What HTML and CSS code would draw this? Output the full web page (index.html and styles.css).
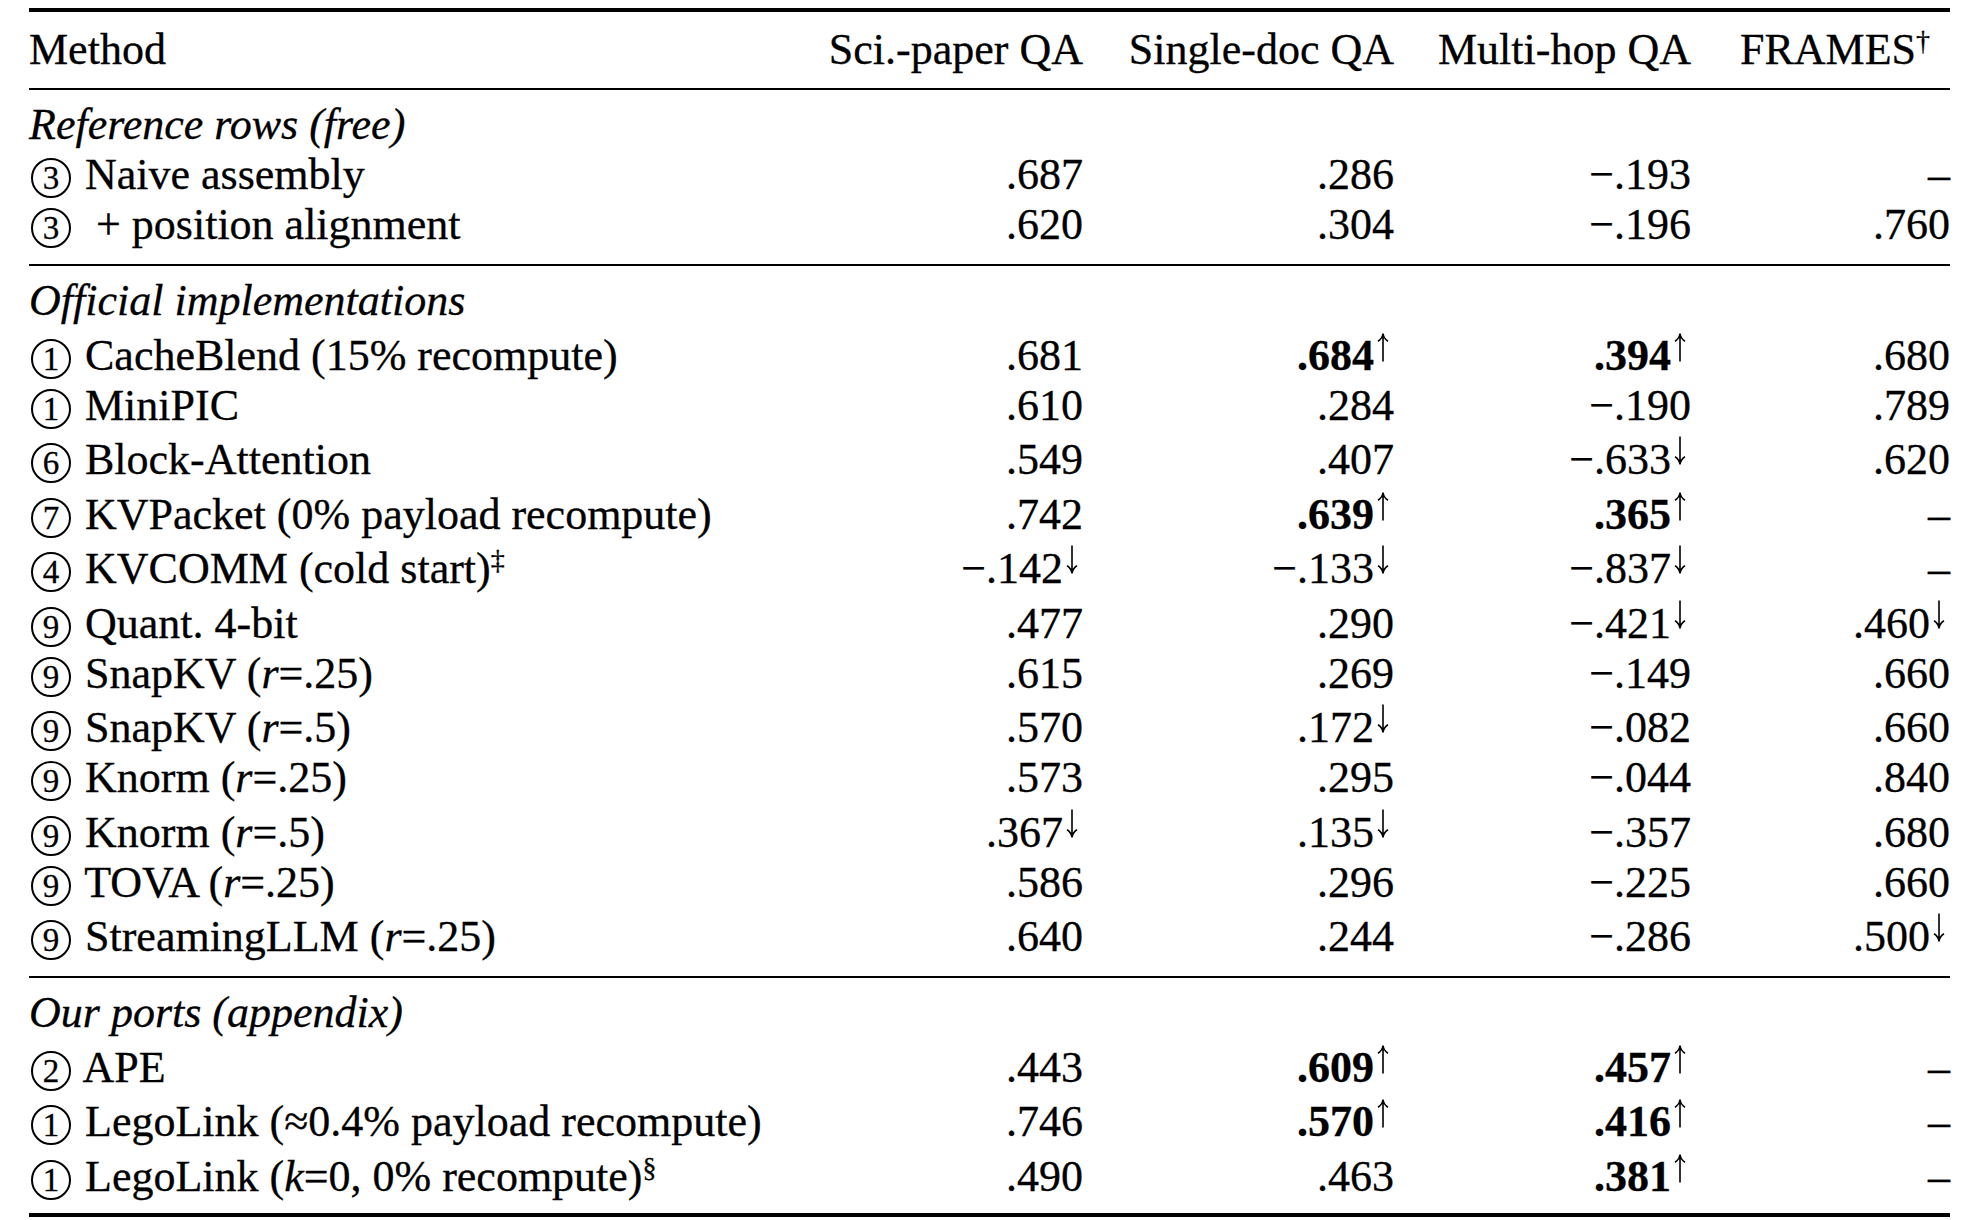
FILE: index.html
```html
<!DOCTYPE html>
<html lang="en">
<head>
  <meta charset="UTF-8">
  <title>Results table</title>
  <link rel="stylesheet" href="styles.css">
</head>
<body>
  <!-- arrow glyphs, reused below -->
  <svg class="defs" width="0" height="0" aria-hidden="true">
    <symbol id="up" viewBox="0 0 18 30"><path d="M9 29.5V1.5M9 1.5C8.5 5 6.8 7.6 4 9.2M9 1.5C9.5 5 11.2 7.6 14 9.2"/></symbol>
    <symbol id="down" viewBox="0 0 18 30"><path d="M9 0.5V28.5M9 28.5C8.5 25 6.8 22.4 4 20.8M9 28.5C9.5 25 11.2 22.4 14 20.8"/></symbol>
  </svg>

  <table class="results">
    <colgroup>
      <col class="col-method">
      <col class="col-sci">
      <col class="col-single">
      <col class="col-multi">
      <col class="col-frames">
    </colgroup>
    <thead>
      <tr>
        <th>Method</th>
        <th>Sci.-paper QA</th>
        <th>Single-doc QA</th>
        <th>Multi-hop QA</th>
        <th class="frames">FRAMES<sup class="note">†</sup></th>
      </tr>
    </thead>
    <tbody>
      <tr><td class="group" colspan="5">Reference rows (free)</td></tr>
      <tr>
        <td><span class="c">3</span> Naive assembly</td>
        <td>.687</td><td>.286</td><td>−.193</td><td>–</td>
      </tr>
      <tr>
        <td><span class="c">3</span> &nbsp;+ position alignment</td>
        <td>.620</td><td>.304</td><td>−.196</td><td>.760</td>
      </tr>
    </tbody>
    <tbody>
      <tr><td class="group" colspan="5">Official implementations</td></tr>
      <tr class="tall">
        <td><span class="c">1</span> CacheBlend (15% recompute)</td>
        <td>.681</td>
        <td><b>.684</b><svg class="arr"><use href="#up"/></svg></td>
        <td><b>.394</b><svg class="arr"><use href="#up"/></svg></td>
        <td>.680</td>
      </tr>
      <tr>
        <td><span class="c">1</span> MiniPIC</td>
        <td>.610</td><td>.284</td><td>−.190</td><td>.789</td>
      </tr>
      <tr class="tall">
        <td><span class="c">6</span> Block-Attention</td>
        <td>.549</td><td>.407</td>
        <td>−.633<svg class="arr"><use href="#down"/></svg></td>
        <td>.620</td>
      </tr>
      <tr class="tall">
        <td><span class="c">7</span> KVPacket (0% payload recompute)</td>
        <td>.742</td>
        <td><b>.639</b><svg class="arr"><use href="#up"/></svg></td>
        <td><b>.365</b><svg class="arr"><use href="#up"/></svg></td>
        <td>–</td>
      </tr>
      <tr class="tall">
        <td><span class="c">4</span> KVCOMM (cold start)<sup class="note">‡</sup></td>
        <td>−.142<svg class="arr"><use href="#down"/></svg></td>
        <td>−.133<svg class="arr"><use href="#down"/></svg></td>
        <td>−.837<svg class="arr"><use href="#down"/></svg></td>
        <td>–</td>
      </tr>
      <tr class="tall">
        <td><span class="c">9</span> Quant. 4-bit</td>
        <td>.477</td><td>.290</td>
        <td>−.421<svg class="arr"><use href="#down"/></svg></td>
        <td>.460<svg class="arr"><use href="#down"/></svg></td>
      </tr>
      <tr>
        <td><span class="c">9</span> SnapKV (<i>r</i>=.25)</td>
        <td>.615</td><td>.269</td><td>−.149</td><td>.660</td>
      </tr>
      <tr class="tall">
        <td><span class="c">9</span> SnapKV (<i>r</i>=.5)</td>
        <td>.570</td>
        <td>.172<svg class="arr"><use href="#down"/></svg></td>
        <td>−.082</td><td>.660</td>
      </tr>
      <tr>
        <td><span class="c">9</span> Knorm (<i>r</i>=.25)</td>
        <td>.573</td><td>.295</td><td>−.044</td><td>.840</td>
      </tr>
      <tr class="tall">
        <td><span class="c">9</span> Knorm (<i>r</i>=.5)</td>
        <td>.367<svg class="arr"><use href="#down"/></svg></td>
        <td>.135<svg class="arr"><use href="#down"/></svg></td>
        <td>−.357</td><td>.680</td>
      </tr>
      <tr>
        <td><span class="c">9</span> TOVA (<i>r</i>=.25)</td>
        <td>.586</td><td>.296</td><td>−.225</td><td>.660</td>
      </tr>
      <tr class="tall">
        <td><span class="c">9</span> StreamingLLM (<i>r</i>=.25)</td>
        <td>.640</td><td>.244</td><td>−.286</td>
        <td>.500<svg class="arr"><use href="#down"/></svg></td>
      </tr>
    </tbody>
    <tbody>
      <tr><td class="group" colspan="5">Our ports (appendix)</td></tr>
      <tr class="tall">
        <td><span class="c">2</span> APE</td>
        <td>.443</td>
        <td><b>.609</b><svg class="arr"><use href="#up"/></svg></td>
        <td><b>.457</b><svg class="arr"><use href="#up"/></svg></td>
        <td>–</td>
      </tr>
      <tr class="tall">
        <td><span class="c">1</span> LegoLink (≈0.4% payload recompute)</td>
        <td>.746</td>
        <td><b>.570</b><svg class="arr"><use href="#up"/></svg></td>
        <td><b>.416</b><svg class="arr"><use href="#up"/></svg></td>
        <td>–</td>
      </tr>
      <tr class="tall">
        <td><span class="c">1</span> LegoLink (<i>k</i>=0, 0% recompute)<sup class="note">§</sup></td>
        <td>.490</td><td>.463</td>
        <td><b>.381</b><svg class="arr"><use href="#up"/></svg></td>
        <td>–</td>
      </tr>
    </tbody>
  </table>
</body>
</html>
```

FILE: styles.css
```css
body { margin: 0; padding: 8px 0 0 29px; background: #fff; color: #000; }
.defs { position: absolute; width: 0; height: 0; overflow: hidden; }

.results {
  border-collapse: separate;
  border-spacing: 0;
  table-layout: fixed;
  width: 1921px;
  font-family: "Liberation Serif", "Times New Roman", serif;
  font-size: 44px;
  line-height: 50px;
  white-space: nowrap;
  -webkit-text-stroke: 0.3px #000;
}
.col-method { width: 771px; }
.col-sci { width: 283px; }
.col-single { width: 311px; }
.col-multi { width: 297px; }
.col-frames { width: 259px; }

.results th,
.results td { padding: 0; text-align: right; font-weight: normal; }
.results th:first-child,
.results td:first-child { text-align: left; }
.results b { font-weight: bold; }

/* booktabs-like rules */
.results thead th { border-top: 4px solid #000; padding: 13px 0; }
.results th.frames { padding-right: 20px; }
.results tbody tr:first-child td { border-top: 2px solid #000; padding-top: 10px; }
.results tbody tr:last-child td { padding-bottom: 14px; }
.results tbody:last-child tr:last-child td { padding-bottom: 11.5px; border-bottom: 4px solid #000; }
.results tr.tall td { padding-top: 4.5px; }

.group { font-style: italic; }

/* circled method family number */
.c {
  display: inline-block;
  box-sizing: border-box;
  width: 40px;
  height: 40px;
  border: 2px solid #000;
  border-radius: 50%;
  font-size: 33px;
  line-height: 36px;
  text-align: center;
  margin: 0 3px 0 2px;
}

.note { font-size: 28px; line-height: 0; vertical-align: 14px; }

.arr {
  width: 18px;
  height: 30px;
  vertical-align: 8px;
  margin-right: 2px;
  fill: none;
  stroke: #000;
  stroke-width: 1.6;
}
```
